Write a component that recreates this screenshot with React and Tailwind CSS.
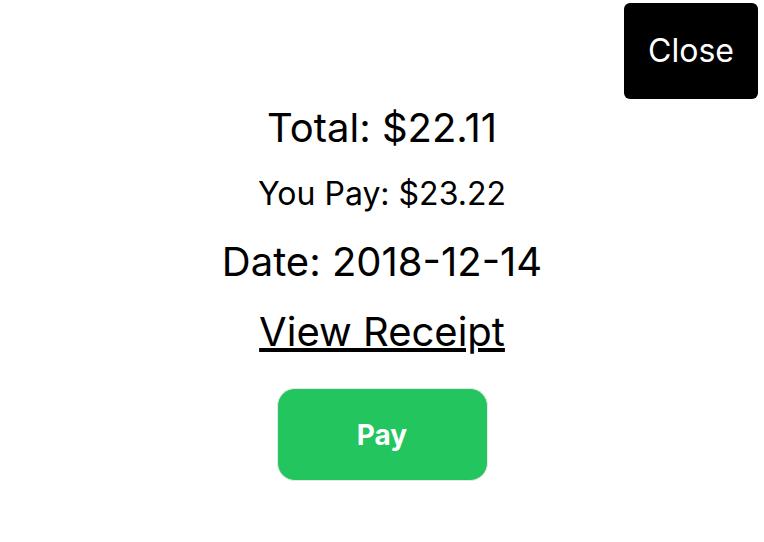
import React from 'react';

export default function App() {
  return (
    <div
      className="w-[764px] h-[542px] bg-white text-black overflow-hidden"
      style={{ fontFamily: 'Inter, "Noto Sans", sans-serif' }}
    >
      <div className="flex justify-end pt-[3px] pr-[6px]">
        <button className="w-[134px] h-[96px] bg-black text-white text-[32px] rounded-md">
          Close
        </button>
      </div>

      <div className="flex flex-col items-center">
        <div className="mt-[5px] text-[40px] leading-[48px]">Total: $22.11</div>
        <div className="mt-[22px] text-[32px] leading-[39px]">You Pay: $23.22</div>
        <div className="mt-[25px] text-[40px] leading-[48px]">Date: 2018-12-14</div>
        <a href="#" className="mt-[22px] text-[40px] leading-[48px] underline">View Receipt</a>
        <button className="mt-[32px] w-[211px] h-[93px] rounded-[18px] bg-[#22c55e] border border-[#e5e7eb] text-white text-[28px] font-bold">
          Pay
        </button>
      </div>
    </div>
  );
}
